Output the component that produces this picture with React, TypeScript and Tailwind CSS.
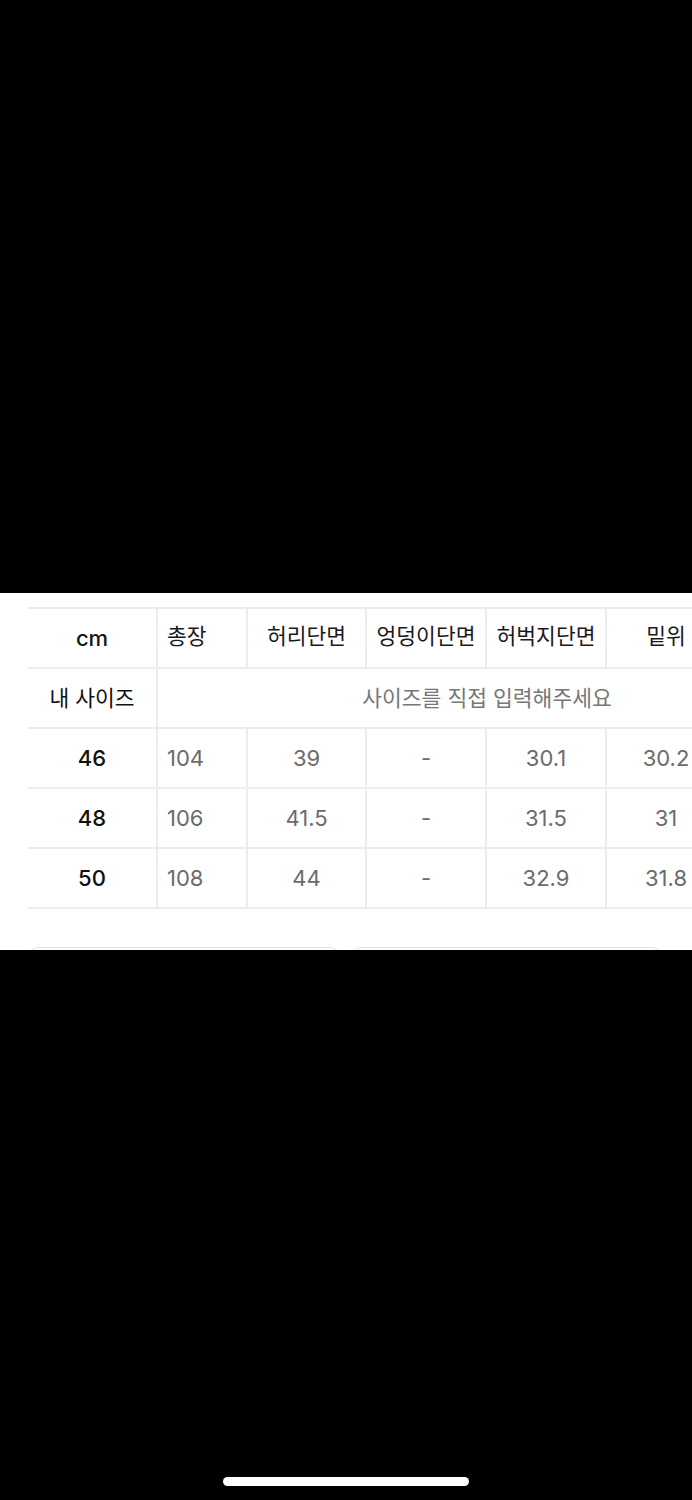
const HEADERS = ["총장", "허리단면", "엉덩이단면", "허벅지단면", "밑위"];

const ROWS = [
  { size: "46", values: ["104", "39", "-", "30.1", "30.2"] },
  { size: "48", values: ["106", "41.5", "-", "31.5", "31"] },
  { size: "50", values: ["108", "44", "-", "32.9", "31.8"] }
];

const cell = "h-[60px] border-t-2 border-[#ededed] flex items-center";

export default function App() {
  return (
    <div className="w-[692px] h-[1500px] bg-black flex flex-col font-['Inter','Noto_Sans_CJK_KR',sans-serif]">
      <div className="h-[593px] shrink-0" />

      <div className="h-[357px] shrink-0 bg-white overflow-hidden pt-[14px] pl-[28px]">
        <div className="grid grid-cols-[128px_90px_119px_120px_120px_120px] w-[697px] border-b-2 border-[#ededed]">
          {/* header */}
          <div className={`${cell} justify-center text-[22px] font-medium text-[#161616]`}>cm</div>
          {HEADERS.map((h, i) => (
            <div
              key={h}
              className={`${cell} border-l-2 text-[21.5px] text-[#1a1a1a] pb-[4px] ${i === 0 ? "pl-[9px]" : "justify-center"}`}
            >
              {h}
            </div>
          ))}

          {/* my size */}
          <div className={`${cell} justify-center text-[21.5px] text-[#111]`}>내 사이즈</div>
          <div className={`${cell} border-l-2 col-span-5 overflow-hidden`}>
            <div className="w-[658px] shrink-0 text-center text-[21.5px] text-[#777]">사이즈를 직접 입력해주세요</div>
          </div>

          {ROWS.map((r) => (
            <div key={r.size} className="contents">
              <div className={`${cell} justify-center text-[22px] font-medium text-[#111]`}>{r.size}</div>
              {r.values.map((v, i) => (
                <div
                  key={i}
                  className={`${cell} border-l-2 text-[22px] text-[#6b6b6b] ${i === 0 ? "pl-[9px]" : "justify-center"}`}
                >
                  {v}
                </div>
              ))}
            </div>
          ))}
        </div>

        <div className="flex gap-[12px] mt-[38px] pr-[30px]">
          <div className="w-[312px] h-[50px] rounded-[10px] border border-[#e2e2e2]" />
          <div className="w-[310px] h-[50px] rounded-[10px] border border-[#e2e2e2]" />
        </div>
      </div>

      <div className="flex-1 flex flex-col justify-end items-center pb-[14px]">
        <div className="w-[246px] h-[9px] rounded-full bg-white" />
      </div>
    </div>
  );
}
